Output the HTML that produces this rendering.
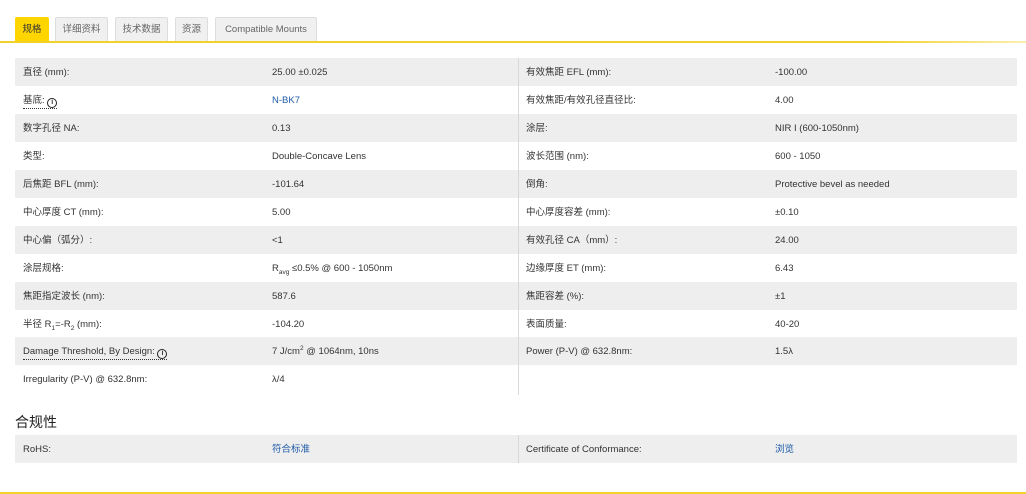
<!DOCTYPE html>
<html><head><meta charset="utf-8"><style>
*{margin:0;padding:0;box-sizing:border-box}
body{width:1026px;height:494px;background:#fff;font-family:"Liberation Sans","Noto Sans CJK SC",sans-serif;font-size:9.5px;color:#333;position:relative;overflow:hidden}
.tab{position:absolute;top:17px;height:24px;border:1px solid #ddd;border-bottom:none;background:#f0f0f0;color:#666;font-size:9.5px;line-height:23px;text-align:center;border-radius:2px 2px 0 0}
.tab.on{background:#ffd500;border-color:#ffd500;color:#333}
.yl{position:absolute;left:0;height:2px;background:linear-gradient(90deg,#f2d22a 0,#f2d22a 85%,#fbefb0 100%)}
.row{position:absolute;height:28px;line-height:30px}
.g{background:#eeeeee}
.c{position:absolute;top:0;white-space:nowrap}
.c.t{top:9px;line-height:12px}
.lk{color:#1e5aa8}
.dv{position:absolute;left:518px;width:1px;background:#d8d8d8}
.i{display:inline-block;width:10px;height:10px;border:1.4px solid #222;border-radius:50%;font-size:7px;line-height:7px;text-align:center;font-weight:bold;vertical-align:-1px}
.dot{border-bottom:1px dotted #333;line-height:12px;display:inline-block}
sub,sup{font-size:6.5px;line-height:0}
</style></head><body>
<div class="tab on" style="left:15px;width:34px">规格</div>
<div class="tab" style="left:55px;width:53px">详细资料</div>
<div class="tab" style="left:115px;width:53px">技术数据</div>
<div class="tab" style="left:175px;width:33px">资源</div>
<div class="tab" style="left:215px;width:102px">Compatible Mounts</div>
<div class="yl" style="top:41px;width:1026px"></div>

<div class="row g" style="top:58px;left:15px;width:503px"><span class="c" style="left:8px">直径 (mm):</span><span class="c" style="left:257px">25.00 ±0.025</span></div>
<div class="row" style="top:86px;left:15px;width:503px"><span class="c t" style="left:8px"><span class="dot">基底: <span class="i">i</span></span></span><span class="c lk" style="left:257px">N-BK7</span></div>
<div class="row g" style="top:114px;left:15px;width:503px"><span class="c" style="left:8px">数字孔径 NA:</span><span class="c" style="left:257px">0.13</span></div>
<div class="row" style="top:142px;left:15px;width:503px"><span class="c" style="left:8px">类型:</span><span class="c" style="left:257px">Double-Concave Lens</span></div>
<div class="row g" style="top:170px;left:15px;width:503px"><span class="c" style="left:8px">后焦距 BFL (mm):</span><span class="c" style="left:257px">-101.64</span></div>
<div class="row" style="top:198px;left:15px;width:503px"><span class="c" style="left:8px">中心厚度 CT (mm):</span><span class="c" style="left:257px">5.00</span></div>
<div class="row g" style="top:226px;left:15px;width:503px"><span class="c" style="left:8px">中心偏（弧分）:</span><span class="c" style="left:257px">&lt;1</span></div>
<div class="row" style="top:254px;left:15px;width:503px"><span class="c" style="left:8px">涂层规格:</span><span class="c" style="left:257px">R<sub>avg</sub> ≤0.5% @ 600 - 1050nm</span></div>
<div class="row g" style="top:282px;left:15px;width:503px"><span class="c" style="left:8px">焦距指定波长 (nm):</span><span class="c" style="left:257px">587.6</span></div>
<div class="row" style="top:310px;left:15px;width:503px"><span class="c" style="left:8px">半径 R<sub>1</sub>=-R<sub>2</sub> (mm):</span><span class="c" style="left:257px">-104.20</span></div>
<div class="row g" style="top:337px;left:15px;width:503px"><span class="c t" style="left:8px"><span class="dot">Damage Threshold, By Design: <span class="i">i</span></span></span><span class="c" style="left:257px">7 J/cm<sup>2</sup> @ 1064nm, 10ns</span></div>
<div class="row" style="top:365px;left:15px;width:503px"><span class="c" style="left:8px">Irregularity (P-V) @ 632.8nm:</span><span class="c" style="left:257px">λ/4</span></div>

<div class="row g" style="top:58px;left:518px;width:499px"><span class="c" style="left:8px">有效焦距 EFL (mm):</span><span class="c" style="left:257px">-100.00</span></div>
<div class="row" style="top:86px;left:518px;width:499px"><span class="c" style="left:8px">有效焦距/有效孔径直径比:</span><span class="c" style="left:257px">4.00</span></div>
<div class="row g" style="top:114px;left:518px;width:499px"><span class="c" style="left:8px">涂层:</span><span class="c" style="left:257px">NIR I (600-1050nm)</span></div>
<div class="row" style="top:142px;left:518px;width:499px"><span class="c" style="left:8px">波长范围 (nm):</span><span class="c" style="left:257px">600 - 1050</span></div>
<div class="row g" style="top:170px;left:518px;width:499px"><span class="c" style="left:8px">倒角:</span><span class="c" style="left:257px">Protective bevel as needed</span></div>
<div class="row" style="top:198px;left:518px;width:499px"><span class="c" style="left:8px">中心厚度容差 (mm):</span><span class="c" style="left:257px">±0.10</span></div>
<div class="row g" style="top:226px;left:518px;width:499px"><span class="c" style="left:8px">有效孔径 CA（mm）:</span><span class="c" style="left:257px">24.00</span></div>
<div class="row" style="top:254px;left:518px;width:499px"><span class="c" style="left:8px">边缘厚度 ET (mm):</span><span class="c" style="left:257px">6.43</span></div>
<div class="row g" style="top:282px;left:518px;width:499px"><span class="c" style="left:8px">焦距容差 (%):</span><span class="c" style="left:257px">±1</span></div>
<div class="row" style="top:310px;left:518px;width:499px"><span class="c" style="left:8px">表面质量:</span><span class="c" style="left:257px">40-20</span></div>
<div class="row g" style="top:337px;left:518px;width:499px"><span class="c" style="left:8px">Power (P-V) @ 632.8nm:</span><span class="c" style="left:257px">1.5λ</span></div>
<div class="dv" style="top:58px;height:337px"></div>

<div style="position:absolute;left:15px;top:412px;font-size:14px;color:#222">合规性</div>
<div class="row g" style="top:435px;left:15px;width:503px"><span class="c" style="left:8px">RoHS:</span><span class="c lk" style="left:257px">符合标准</span></div>
<div class="row g" style="top:435px;left:518px;width:499px"><span class="c" style="left:8px">Certificate of Conformance:</span><span class="c lk" style="left:257px">浏览</span></div>
<div class="dv" style="top:435px;height:28px"></div>
<div class="yl" style="top:492px;width:1026px;background:#f2d22a"></div>
</body></html>
